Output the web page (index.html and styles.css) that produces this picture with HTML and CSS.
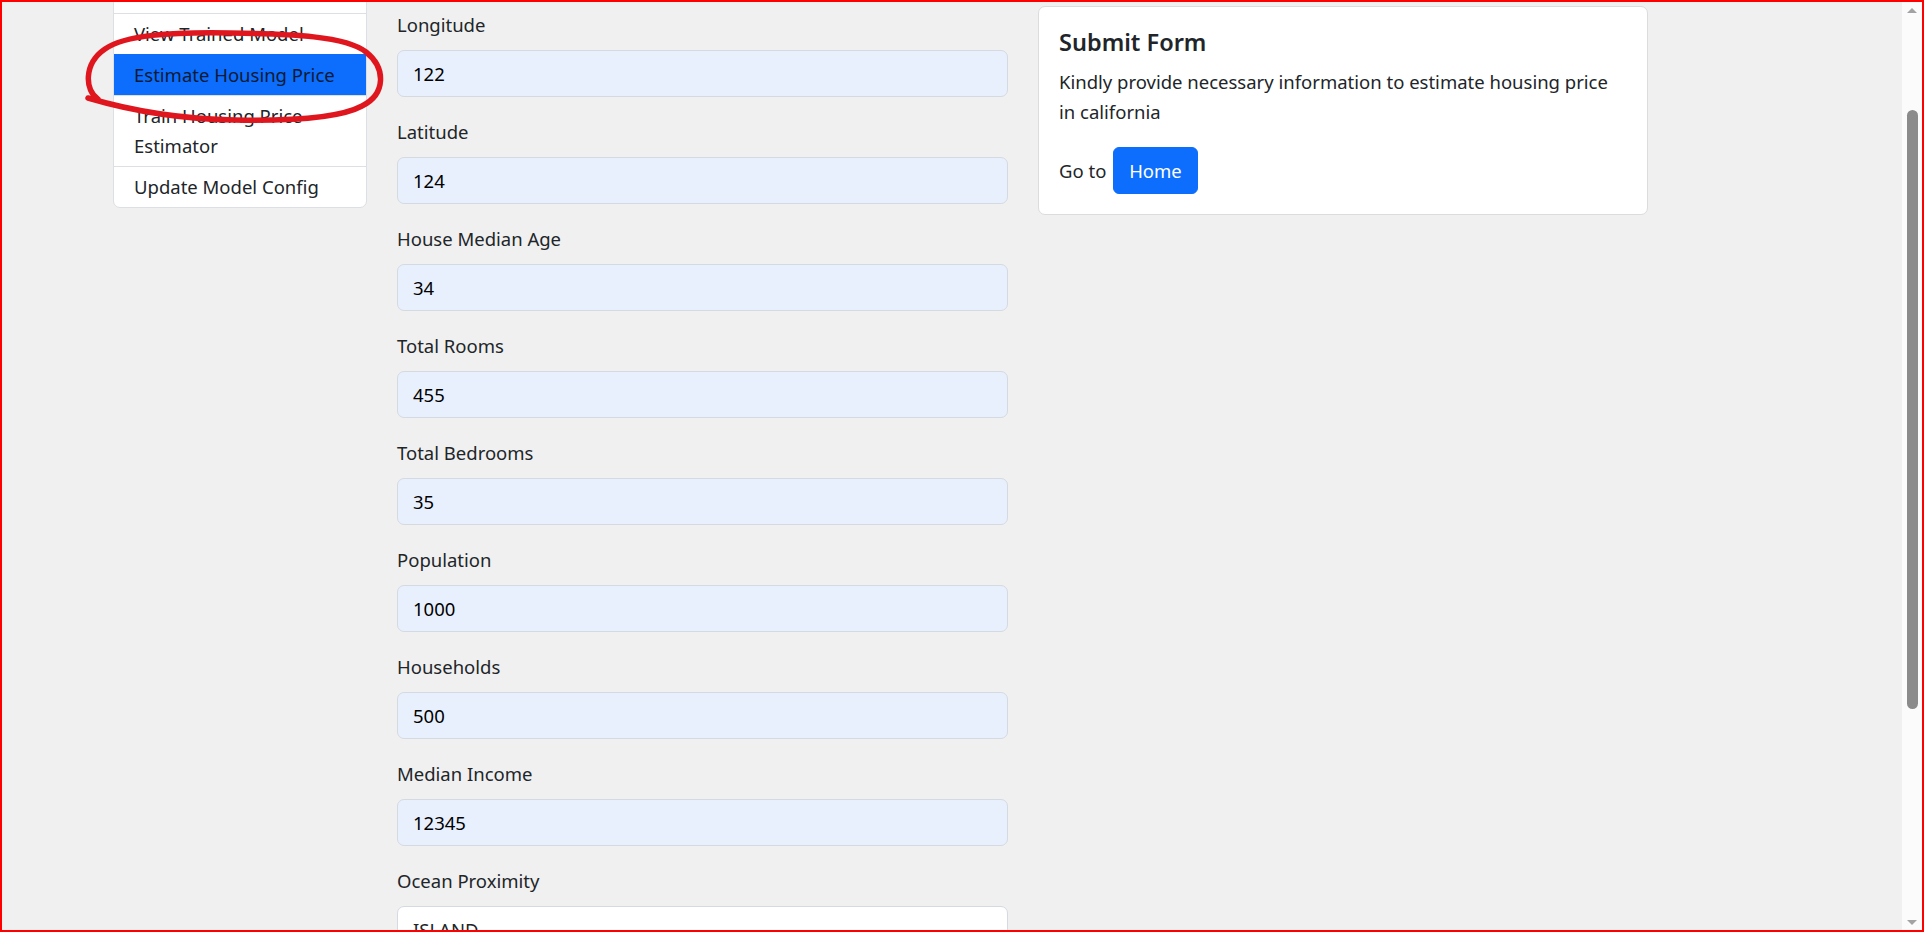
FILE: index.html
```html
<!DOCTYPE html>
<html lang="en">
<head>
<meta charset="utf-8">
<title>Estimate Housing Price</title>
<link rel="stylesheet" href="styles.css">
</head>
<body>
<div class="frame">
  <div class="viewport">
    <div class="page">
      <aside class="sidebar">
        <ul class="list-group">
          <li class="list-item" aria-hidden="true">&nbsp;</li>
          <li class="list-item">View Trained Model</li>
          <li class="list-item active">Estimate Housing Price</li>
          <li class="list-item">Train Housing Price Estimator</li>
          <li class="list-item">Update Model Config</li>
        </ul>
      </aside>
      <main class="form-col">
        <form class="estimate-form">
          <div class="field"><label class="field-label">Longitude</label><input class="field-input autofill" type="text" value="122"></div>
          <div class="field"><label class="field-label">Latitude</label><input class="field-input autofill" type="text" value="124"></div>
          <div class="field"><label class="field-label">House Median Age</label><input class="field-input autofill" type="text" value="34"></div>
          <div class="field"><label class="field-label">Total Rooms</label><input class="field-input autofill" type="text" value="455"></div>
          <div class="field"><label class="field-label">Total Bedrooms</label><input class="field-input autofill" type="text" value="35"></div>
          <div class="field"><label class="field-label">Population</label><input class="field-input autofill" type="text" value="1000"></div>
          <div class="field"><label class="field-label">Households</label><input class="field-input autofill" type="text" value="500"></div>
          <div class="field"><label class="field-label">Median Income</label><input class="field-input autofill" type="text" value="12345"></div>
          <div class="field"><label class="field-label">Ocean Proximity</label>
            <select class="field-input field-select"><option>ISLAND</option><option>NEAR BAY</option><option>INLAND</option></select>
          </div>
        </form>
      </main>
      <section class="card">
        <h5 class="card-title">Submit Form</h5>
        <p class="card-text">Kindly provide necessary information to estimate housing price in california</p>
        <div class="card-actions">Go to <a class="btn-primary">Home</a></div>
      </section>
    </div>
    <svg class="annotation" width="420" height="140" viewBox="2 2 420 140" xmlns="http://www.w3.org/2000/svg">
      <path d="M 98 99 C 85 91, 83 64, 105 49 C 125 35, 170 32, 230 33 C 292 34, 346 36, 366 52 C 386 68, 386 94, 362 106 C 340 118, 290 121, 235 120 C 180 119, 132 111, 88 98" fill="none" stroke="#e0161e" stroke-width="5.5" stroke-linecap="round" stroke-linejoin="round"/>
    </svg>
  </div>
  <div class="scrollbar">
    <div class="sb-arrow"><span class="tri-up"></span></div>
    <div class="sb-track"><div class="sb-thumb"></div></div>
    <div class="sb-arrow"><span class="tri-down"></span></div>
  </div>
</div>
</body>
</html>
```
FILE: styles.css
```css
* { box-sizing: border-box; }
html, body { margin: 0; padding: 0; overflow: hidden; }
body {
  font-family: "Noto Sans", "Open Sans", sans-serif;
  font-size: 18.5px;
  line-height: 30px;
  color: #212529;
  background: #f0f0f0;
}
.frame {
  width: 1924px;
  height: 932px;
  border: 2px solid #ff0000;
  display: flex;
  position: relative;
}
.viewport {
  flex: 1;
  overflow: hidden;
  background: #f0f0f0;
}
.page {
  display: flex;
  align-items: flex-start;
  gap: 30px;
  padding: 4px 0 0 111px;
}
.sidebar {
  width: 254px;
  flex: none;
  margin-top: -34px;
}
.list-group {
  list-style: none;
  margin: 0;
  padding: 0;
  background: #fff;
  border: 1px solid #dcdfe3;
  border-radius: 7px;
  overflow: hidden;
}
.list-item {
  padding: 5px 20px;
  line-height: 30px;
  border-top: 1px solid #dcdfe3;
  color: #212529;
}
.list-item:first-child { border-top: 0; }
.list-item.active {
  background: #0d6efd;
  border-top-color: #0d6efd;
  color: #0b1a33;
}
.form-col {
  width: 611px;
  flex: none;
  padding-top: 4px;
}
.estimate-form { margin: 0; }
.field { margin-bottom: 20px; }
.field-label {
  display: block;
  line-height: 30px;
  margin-bottom: 10px;
}
.field-input {
  display: block;
  width: 100%;
  height: 47px;
  padding: 7px 15px;
  font: inherit;
  line-height: 30px;
  color: #000;
  background: #fff;
  border: 1px solid #d5dae1;
  border-radius: 7px;
  outline: none;
}
.field-input.autofill { background: #e8f0fe; }
.field-select {
  appearance: none;
  -webkit-appearance: none;
  color: #212529;
}
.card {
  width: 610px;
  flex: none;
  background: #fff;
  border: 1px solid #dcdcdc;
  border-radius: 7px;
  padding: 20px;
}
.card-title {
  margin: 0 0 10px;
  font-size: 23.5px;
  font-weight: 600;
  line-height: 30px;
  color: #212529;
}
.card-text {
  margin: 0 0 20px;
  line-height: 30px;
}
.card-actions { line-height: 30px; }
.btn-primary {
  display: inline-block;
  margin-left: 2px;
  padding: 7.5px 15px;
  line-height: 30px;
  color: #fff;
  background: #0d6efd;
  border: 1px solid #0d6efd;
  border-radius: 6px;
  text-decoration: none;
}
.annotation {
  position: absolute;
  left: 0;
  top: 0;
  pointer-events: none;
}
.scrollbar {
  width: 20px;
  flex: none;
  background: #fbfbfb;
  display: flex;
  flex-direction: column;
  align-items: center;
}
.sb-arrow {
  height: 16px;
  width: 100%;
  display: flex;
  align-items: center;
  justify-content: center;
}
.tri-up {
  width: 0; height: 0;
  border-left: 5px solid transparent;
  border-right: 5px solid transparent;
  border-bottom: 5px solid #a3a3a3;
}
.tri-down {
  width: 0; height: 0;
  border-left: 5px solid transparent;
  border-right: 5px solid transparent;
  border-top: 5px solid #a3a3a3;
}
.sb-track {
  flex: 1;
  width: 100%;
  display: flex;
  justify-content: center;
}
.sb-thumb {
  width: 11px;
  height: 599px;
  margin-top: 92px;
  background: #8b8b8b;
  border-radius: 6px;
}
```
